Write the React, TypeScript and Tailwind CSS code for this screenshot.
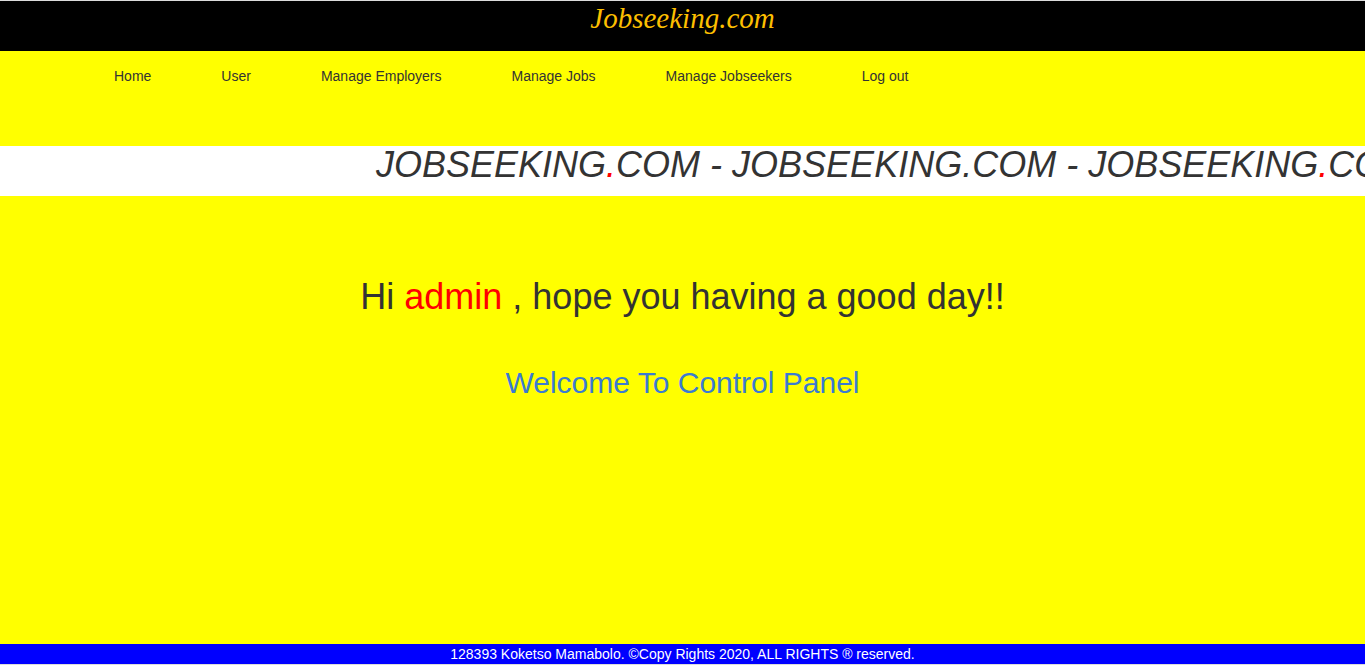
import React from "react";

const navItems = ["Home", "User", "Manage Employers", "Manage Jobs", "Manage Jobseekers", "Log out"];

function Brand({ redDot }: { redDot: boolean }) {
  return (
    <span>
      JOBSEEKING<span className={redDot ? "text-[#ff0000]" : ""}>.</span>COM
    </span>
  );
}

export default function App() {
  return (
    <div className="w-[1365px] h-[665px] overflow-hidden flex flex-col bg-[#dcdcdc] font-['Liberation_Sans',Arial,sans-serif]">
      <div className="h-[1px] shrink-0" />
      <header className="h-[50px] shrink-0 bg-black flex justify-center overflow-hidden">
        <span className="font-['Liberation_Serif','Times_New_Roman',serif] italic text-[29px] leading-[34px] text-[#fcbf00]">
          Jobseeking.com
        </span>
      </header>
      <nav className="h-[95px] shrink-0 bg-[#ffff00] pl-[79px] pt-[15px]">
        <ul className="flex">
          {navItems.map((n) => (
            <li key={n} className="px-[35px] text-[14px] leading-[20px] text-[#333333]">
              {n}
            </li>
          ))}
        </ul>
      </nav>
      <div className="h-[50px] shrink-0 bg-white overflow-hidden whitespace-nowrap">
        <div className="pl-[376px] italic text-[36px] leading-[38px] text-[#333333]">
          <Brand redDot={true} /> - <Brand redDot={false} /> - <Brand redDot={true} />
        </div>
      </div>
      <main className="h-[448px] shrink-0 bg-[#ffff00] flex flex-col items-center pt-[74px]">
        <h1 className="text-[36px] leading-normal text-[#333333]">
          Hi <span className="text-[#ff0000]">admin</span> , hope you having a good day!!
        </h1>
        <h2 className="mt-[36px] text-[30px] leading-normal text-[#3b7bd1]">Welcome To Control Panel</h2>
      </main>
      <footer className="h-[20px] shrink-0 bg-[#0000ff] text-white text-[14px] leading-[20px] text-center">
        128393 Koketso Mamabolo. ©Copy Rights 2020, ALL RIGHTS ® reserved.
      </footer>
    </div>
  );
}
